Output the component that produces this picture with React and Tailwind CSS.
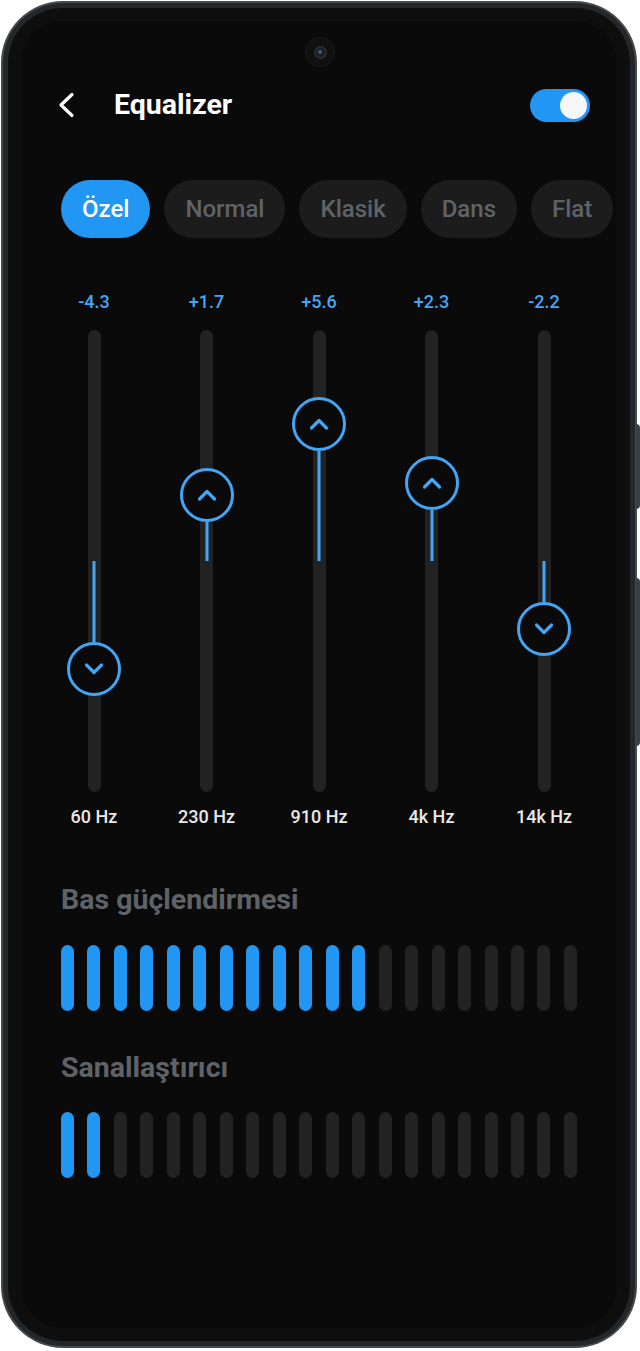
import React from 'react';

const PRESETS = ['Özel', 'Normal', 'Klasik', 'Dans', 'Flat'];

// knob = center of the knob measured from the top of the track (track is 462px tall)
const BANDS = [
  { value: '-4.3', label: '60 Hz', knob: 339 },
  { value: '+1.7', label: '230 Hz', knob: 165 },
  { value: '+5.6', label: '910 Hz', knob: 94 },
  { value: '+2.3', label: '4k Hz', knob: 153 },
  { value: '-2.2', label: '14k Hz', knob: 299 },
];

const TRACK_MID = 231;
const KNOB = 54;

function Chevron({ up }) {
  return (
    <svg width="24" height="24" viewBox="0 0 24 24" fill="none">
      <path
        d={up ? 'M4.5 16L12 8.5L19.5 16' : 'M4.5 8L12 15.5L19.5 8'}
        stroke="#42a5f5"
        strokeWidth="3.2"
        strokeLinecap="round"
        strokeLinejoin="round"
      />
    </svg>
  );
}

function BandSlider({ band }) {
  const up = band.knob < TRACK_MID;
  const edge = up ? band.knob + KNOB / 2 : band.knob - KNOB / 2;
  const fillTop = up ? edge : TRACK_MID;
  const fillHeight = up ? TRACK_MID - edge : edge - TRACK_MID;

  return (
    <div className="w-[66px] flex flex-col items-center">
      <span className="text-[18px] leading-[20px] font-medium text-[#45a7f2]">{band.value}</span>
      <div className="relative mt-[18px] h-[462px] w-[13px] rounded-full bg-[#222222]">
        <div
          className="absolute left-1/2 -translate-x-1/2 w-[3px] bg-[#42a5f5]"
          style={{ top: fillTop, height: fillHeight }}
        />
        <div
          className="absolute left-1/2 -translate-x-1/2 w-[54px] h-[54px] rounded-full border-[3px] border-[#42a5f5] bg-[#0a0a0a] flex items-center justify-center"
          style={{ top: band.knob - KNOB / 2 }}
        >
          <Chevron up={up} />
        </div>
      </div>
      <span className="mt-[15px] text-[18px] leading-[20px] font-medium text-[#e8e8e8] whitespace-nowrap">{band.label}</span>
    </div>
  );
}

function LevelBars({ active }) {
  return (
    <div className="flex justify-between px-[40px]">
      {Array.from({ length: 20 }).map((_, i) => (
        <div
          key={i}
          className={`w-[13px] h-[66px] rounded-full ${i < active ? 'bg-[#2196f3]' : 'bg-[#222222]'}`}
        />
      ))}
    </div>
  );
}

export default function App() {
  return (
    <div className="relative w-[640px] h-[1351px] bg-white" style={{ fontFamily: 'Roboto, "Noto Sans", sans-serif' }}>
      {/* side buttons */}
      <div className="absolute right-0 top-[423px] w-[4px] h-[85px] rounded-r-sm bg-[#3a3f44]" />
      <div className="absolute right-0 top-[577px] w-[4px] h-[168px] rounded-r-sm bg-[#3a3f44]" />

      <div className="ml-[1px] mt-[1px] w-[636px] h-[1347px] rounded-[62px] bg-[#454a4f] p-[2px]">
        <div className="h-full rounded-[60px] bg-[#24272a] p-[5px]">
          <div className="h-full rounded-[55px] bg-[#0e0e0e] p-[13px]">
            <div className="relative h-full rounded-[42px] bg-[#0a0a0a] overflow-hidden">
              {/* camera */}
              <div className="absolute left-[284px] top-[16px] w-[30px] h-[30px] rounded-full bg-[#101010] border border-[#1c1c1c] flex items-center justify-center">
                <div className="w-[13px] h-[13px] rounded-full bg-[#1b1d22] border-[2px] border-[#2a2c30] flex items-center justify-center">
                  <div className="w-[4px] h-[4px] rounded-full bg-[#3b5a8a]" />
                </div>
              </div>

              {/* header */}
              <div className="mt-[60px] h-[48px] flex items-center justify-between pl-[31px] pr-[27px]">
                <div className="flex items-center">
                  <svg width="28" height="28" viewBox="0 0 28 28" fill="none">
                    <path d="M20 3.5L9 14L20 24.5" stroke="#ffffff" strokeWidth="3.2" strokeLinecap="round" strokeLinejoin="round" />
                  </svg>
                  <h1 className="ml-[34px] text-[28.5px] font-bold text-white">Equalizer</h1>
                </div>
                <div className="w-[60px] h-[33px] rounded-full bg-[#2196f3] flex items-center justify-end pr-[3px]">
                  <div className="w-[27px] h-[27px] rounded-full bg-[#f4f6f8]" />
                </div>
              </div>

              {/* presets */}
              <div className="mt-[51px] flex gap-[14px] pl-[40px] overflow-hidden">
                {PRESETS.map((p, i) => (
                  <div
                    key={p}
                    className={`shrink-0 h-[58px] px-[21px] rounded-full flex items-center text-[24px] font-medium ${
                      i === 0 ? 'bg-[#2196f3] text-white' : 'bg-[#1c1c1c] text-[#5f6368]'
                    }`}
                  >
                    {p}
                  </div>
                ))}
              </div>

              {/* bands */}
              <div className="mt-[54px] flex justify-between px-[40px]">
                {BANDS.map((b) => (
                  <BandSlider key={b.label} band={b} />
                ))}
              </div>

              {/* bass boost */}
              <h2 className="mt-[59px] px-[40px] text-[28.5px] leading-[28px] font-bold text-[#5f6368]">Bas güçlendirmesi</h2>
              <div className="mt-[31px]">
                <LevelBars active={12} />
              </div>

              {/* virtualizer */}
              <h2 className="mt-[43px] px-[40px] text-[28.5px] leading-[28px] font-bold text-[#5f6368]">Sanallaştırıcı</h2>
              <div className="mt-[30px]">
                <LevelBars active={2} />
              </div>
            </div>
          </div>
        </div>
      </div>
    </div>
  );
}
